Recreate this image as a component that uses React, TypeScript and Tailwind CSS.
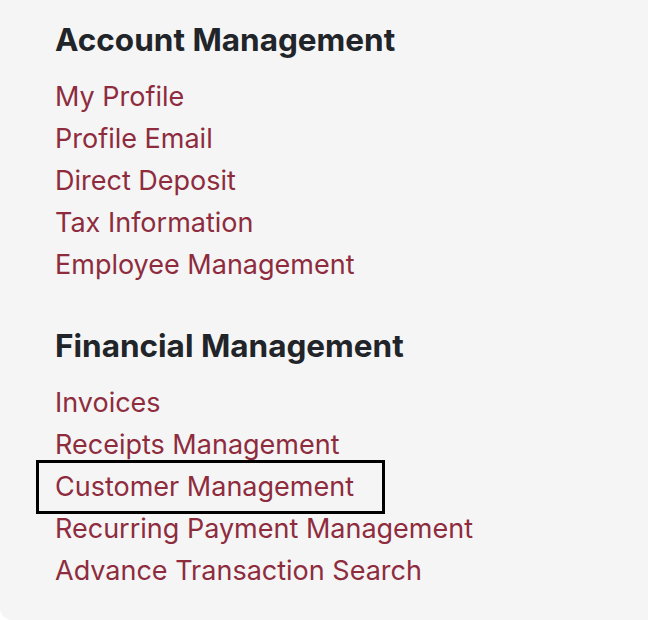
const account = ["My Profile", "Profile Email", "Direct Deposit", "Tax Information", "Employee Management"];
const financial = [
  "Invoices",
  "Receipts Management",
  "Customer Management",
  "Recurring Payment Management",
  "Advance Transaction Search",
];

function Section({ title, links, boxed }: { title: string; links: string[]; boxed?: string }) {
  return (
    <section>
      <h2 className="text-[31.5px] font-bold leading-[40px] text-[#212529]">{title}</h2>
      <ul className="mt-[16px] flex flex-col">
        {links.map((l) => (
          <li key={l} className="relative text-[27px] leading-[42px]">
            <a href="#" className="text-[#8e2c3e]">
              {l}
            </a>
            {l === boxed && (
              <span className="pointer-events-none absolute -left-[19px] top-[-6px] h-[54px] w-[349px] border-[3px] border-black" />
            )}
          </li>
        ))}
      </ul>
    </section>
  );
}

export default function App() {
  return (
    <div className="h-[620px] w-[648px] bg-white" style={{ fontFamily: "Inter, 'Liberation Sans', sans-serif" }}>
      <div className="flex h-[620px] flex-col gap-[40px] rounded-bl-[12px] bg-[#f5f5f5] pl-[55px] pt-[20px]">
        <Section title="Account Management" links={account} />
        <Section title="Financial Management" links={financial} boxed="Customer Management" />
      </div>
    </div>
  );
}
